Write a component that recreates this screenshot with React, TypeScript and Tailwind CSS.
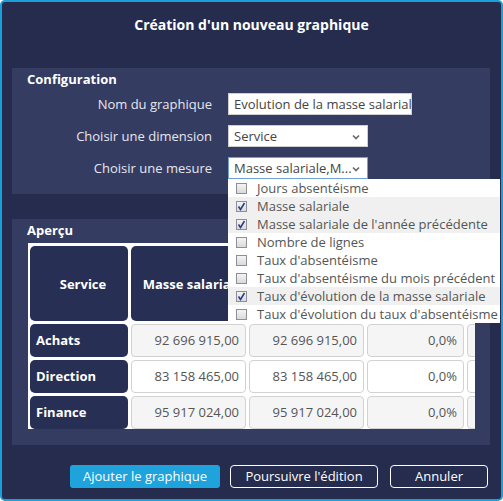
import React from "react";

const measures = [
  { label: "Jours absentéisme", checked: false },
  { label: "Masse salariale", checked: true },
  { label: "Masse salariale de l'année précédente", checked: true },
  { label: "Nombre de lignes", checked: false },
  { label: "Taux d'absentéisme", checked: false },
  { label: "Taux d'absentéisme du mois précédent", checked: false },
  { label: "Taux d'évolution de la masse salariale", checked: true },
  { label: "Taux d'évolution du taux d'absentéisme", checked: false },
];

const headers = [
  "Service",
  "Masse salariale",
  "Masse salariale de l'année précédente",
  "Taux d'évolution de la masse salariale",
  "",
];

const rows = [
  { service: "Achats", ms: "92 696 915,00", prev: "92 696 915,00", taux: "0,0%" },
  { service: "Direction", ms: "83 158 465,00", prev: "83 158 465,00", taux: "0,0%" },
  { service: "Finance", ms: "95 917 024,00", prev: "95 917 024,00", taux: "0,0%" },
];

const Chevron = () => (
  <svg width="8" height="6" viewBox="0 0 8 6" className="shrink-0">
    <path d="M1 1.5 L4 4.5 L7 1.5" fill="none" stroke="#6b6b6b" strokeWidth="1.7" />
  </svg>
);

const Checkbox = ({ checked }: { checked: boolean }) => (
  <span className="relative w-[11px] h-[11px] shrink-0 border border-[#8e8e96] bg-gradient-to-b from-[#f4f4f4] to-[#dadada]">
    {checked && (
      <svg width="11" height="11" viewBox="0 0 11 11" className="absolute -left-px -top-px">
        <path d="M2.5 5.5 L4.5 8.5 L8.5 2" fill="none" stroke="#2c3f8c" strokeWidth="1.6" />
      </svg>
    )}
  </span>
);

const FormRow = ({ label, children }: { label: string; children: React.ReactNode }) => (
  <div className="flex items-center h-[22px]">
    <div className="w-[200px] pt-[1px] text-right text-[13px] text-[#e6e7ee] whitespace-nowrap">{label}</div>
    <div className="w-[16px] pt-[1px] pl-[3px] text-[13px] text-[#2d3a6a]">:</div>
    {children}
  </div>
);

export default function App() {
  return (
    <div className="w-[503px] h-[501px] font-['Open_Sans',sans-serif] bg-white">
      <div className="relative w-[503px] h-[501px] border-2 border-[#1a9fd8] rounded-[5px] bg-[#252c4e] flex flex-col">
        <h1 className="mt-[13px] h-[20px] leading-[20px] text-center text-[14px] font-bold text-white">
          Création d'un nouveau graphique
        </h1>

        {/* Configuration */}
        <div className="mt-[33px] ml-[10px] mr-[11px] h-[126px] bg-[#353c62]">
          <div className="px-[15px] pt-[1px] h-[20px] leading-[20px] text-[13px] font-bold text-white">Configuration</div>
          <div className="mt-[5px] flex flex-col gap-[10px]">
            <FormRow label="Nom du graphique">
              <div className="w-[184px] h-[22px] bg-white border border-[#cfcfcf] px-[5px] leading-[21px] text-[13px] text-[#444] whitespace-nowrap overflow-hidden">
                Evolution de la masse salariale
              </div>
            </FormRow>
            <FormRow label="Choisir une dimension">
              <div className="w-[140px] h-[22px] bg-white border border-[#cfcfcf] pl-[5px] pr-[7px] pt-[1px] flex items-center justify-between text-[13px] text-[#444]">
                <span>Service</span>
                <Chevron />
              </div>
            </FormRow>
            <FormRow label="Choisir une mesure">
              <div className="relative">
                <div className="w-[140px] h-[22px] bg-white border border-[#6fa3d8] pl-[5px] pr-[7px] pt-[1px] flex items-center justify-between text-[13px] text-[#444]">
                  <span className="whitespace-nowrap">Masse salariale,M...</span>
                  <Chevron />
                </div>
                <ul className="absolute z-10 left-0 top-[22px] w-[272px] bg-white">
                  {measures.map((m) => (
                    <li
                      key={m.label}
                      className={`h-[18px] pt-[1px] flex items-center gap-[10px] pl-[8px] text-[13px] text-[#555] whitespace-nowrap ${
                        m.checked ? "bg-[#f0f0f0]" : "bg-white"
                      }`}
                    >
                      <Checkbox checked={m.checked} />
                      {m.label}
                    </li>
                  ))}
                </ul>
              </div>
            </FormRow>
          </div>
        </div>

        {/* Aperçu */}
        <div className="mt-[25px] ml-[10px] mr-[11px] h-[226px] bg-[#353c62]">
          <div className="px-[15px] pt-[1px] h-[20px] leading-[20px] text-[13px] font-bold text-white">Aperçu</div>
          <div className="mt-[4px] ml-[16px] w-[447px] h-[186px] bg-white overflow-hidden">
            <div className="grid grid-cols-[98px_115px_115px_97px_96px] grid-rows-[75px_33px_33px_33px] gap-[3px] pl-[2px] pt-[3px] text-[13px]">
              {headers.map((h, i) => (
                <div
                  key={i}
                  className={`rounded-[5px] bg-[#282f55] flex items-center justify-center text-center font-bold text-white leading-[17px] overflow-hidden pl-[12px] pr-[4px] pt-[1px] ${
                    i < 2 ? "whitespace-nowrap" : ""
                  }`}
                >
                  {h}
                </div>
              ))}
              {rows.map((r, i) => {
                const cell = `rounded-[4px] border border-[#d2d2d2] flex items-center justify-end pr-[6px] pt-[1px] text-[#555] ${
                  i % 2 === 0 ? "bg-[#f5f5f5]" : "bg-white"
                }`;
                return (
                  <React.Fragment key={r.service}>
                    <div className="rounded-[5px] bg-[#282f55] flex items-center pl-[6px] pt-[1px] font-bold text-white">{r.service}</div>
                    <div className={cell}>{r.ms}</div>
                    <div className={cell}>{r.prev}</div>
                    <div className={cell}>{r.taux}</div>
                    <div className={cell}></div>
                  </React.Fragment>
                );
              })}
            </div>
          </div>
        </div>

        {/* Actions */}
        <div className="mt-[20px] mr-[13px] flex justify-end gap-[10px] text-[13px] text-white">
          <button className="w-[150px] h-[23px] pt-[1px] rounded-[3px] bg-[#1ea3dd]">Ajouter le graphique</button>
          <button className="w-[148px] h-[23px] pt-[1px] rounded-[4px] border border-white">Poursuivre l'édition</button>
          <button className="ml-[2px] w-[98px] h-[23px] pt-[1px] rounded-[4px] border border-white">Annuler</button>
        </div>
      </div>
    </div>
  );
}
